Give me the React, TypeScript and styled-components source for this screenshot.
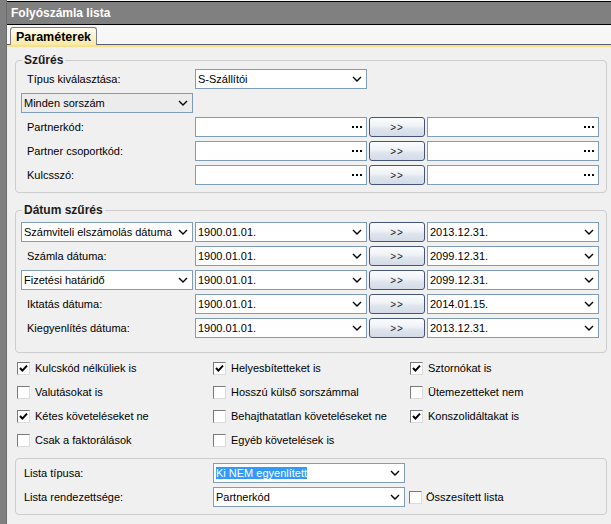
import React from 'react'
import styled, { createGlobalStyle } from 'styled-components'

const GlobalStyle = createGlobalStyle`
  * { box-sizing: border-box; }
  html, body { margin: 0; padding: 0; }
  body {
    font-family: "Liberation Sans", Arial, sans-serif;
    font-size: 11px;
    color: #000;
    background: #f0f0f0;
  }
`

const Window = styled.div`
  display: flex;
  width: 611px;
  height: 524px;
  overflow: hidden;
  background: #f0f0f0;
`
const SideStripe = styled.div`
  width: 7px;
  flex-shrink: 0;
  background: #808080;
  border-right: 1px solid #6c6c6c;
`
const Main = styled.div`
  flex: 1;
  display: flex;
  flex-direction: column;
  padding-top: 1px;
  background: #f7f7f7;
`
const TitleBar = styled.div`
  height: 24px;
  display: flex;
  align-items: center;
  padding-left: 4px;
  background: #808080;
  border-top: 1px solid #000;
  border-bottom: 1px solid #000;
  color: #fff;
  font-weight: bold;
  font-size: 12px;
`
const TabStrip = styled.div`
  height: 20px;
  display: flex;
  align-items: flex-end;
  padding-left: 3px;
  background: #f7f7f7;
  border-bottom: 1px solid #5c5c6e;
`
const Tab = styled.div`
  height: 18px;
  margin-bottom: -1px;
  padding: 0 5px 0 5px;
  display: flex;
  align-items: center;
  border: 1px solid #7c7c8c;
  border-bottom: none;
  border-radius: 3px 3px 0 0;
  background: linear-gradient(#fffdf2, #fbe9a2);
  font-weight: bold;
  font-size: 12.5px;
`
const TabBand = styled.div`
  height: 2px;
  background: #f9e18b;
`
const Panel = styled.div`
  flex: 1;
  display: flex;
  flex-direction: column;
  padding: 0 5px 0 8px;
  background: #f0f0f0;
`
const Group = styled.fieldset<{ $mt: number; $pt: number; $pb: number; $pl?: number }>`
  margin: ${p => p.$mt}px 0 0 0;
  min-width: 0;
  padding: ${p => p.$pt}px 7px ${p => p.$pb}px ${p => p.$pl ?? 5}px;
  border: 1px solid #cdcdcd;
  border-radius: 4px;
`
const Legend = styled.legend`
  margin-left: 1px;
  padding: 0 2px;
  line-height: 14px;
  font-weight: bold;
  font-size: 12px;
  color: #1c1c1c;
`
const FieldGrid = styled.div`
  display: grid;
  grid-template-columns: 172px 172px 56px 172px;
  grid-auto-rows: 20px;
  gap: 4px 2px;
`
const Label = styled.div<{ $indent?: number }>`
  display: flex;
  align-items: center;
  padding-left: ${p => p.$indent ?? 6}px;
  white-space: nowrap;
`
const Combo = styled.div<{ $muted?: boolean }>`
  display: flex;
  align-items: center;
  justify-content: space-between;
  gap: 4px;
  padding: 0 4px 0 2px;
  border: 1px solid #7f9db9;
  background: ${p => (p.$muted ? '#ececec' : '#fff')};
  white-space: nowrap;
  span {
    overflow: hidden;
  }
  svg {
    flex-shrink: 0;
  }
`
const TextBox = styled.div`
  display: flex;
  align-items: center;
  justify-content: flex-end;
  padding-right: 4px;
  border: 1px solid #7f9db9;
  background: #fff;
`
const Selected = styled.span`
  background: #3399ff;
  color: #fff;
  padding: 2px 0;
`
const ArrowButton = styled.div`
  display: flex;
  align-items: center;
  justify-content: center;
  border: 1px solid #44547c;
  border-radius: 3px;
  background: linear-gradient(#fbfcfd 0%, #eef1f6 45%, #dfe5ee 60%, #d4dbe7 100%);
  font-size: 10px;
  letter-spacing: 1px;
  color: #222;
`
const CheckGrid = styled.div`
  display: grid;
  grid-template-columns: 196px 197px 1fr;
  grid-auto-rows: 24px;
  margin: 3px 0 6px 2px;
`
const CheckItem = styled.label`
  display: flex;
  align-items: center;
  gap: 5px;
  white-space: nowrap;
`
const Box = styled.span`
  width: 13px;
  height: 13px;
  flex-shrink: 0;
  display: flex;
  align-items: center;
  justify-content: center;
  background: #fff;
  border: 1px solid;
  border-color: #7a7a7a #dcdcdc #dcdcdc #7a7a7a;
`
const ListGrid = styled.div`
  display: grid;
  grid-template-columns: 189px 192px auto;
  grid-auto-rows: 20px;
  row-gap: 4px;
`
const Trailing = styled.div`
  display: flex;
  align-items: center;
  gap: 4px;
  padding-left: 4px;
`

const Chevron = () => (
  <svg width="10" height="6" viewBox="0 0 10 6">
    <polyline points="1,1 5,5 9,1" fill="none" stroke="#000" strokeWidth="1.4" />
  </svg>
)

const Dots = () => (
  <svg width="10" height="2" viewBox="0 0 10 2">
    <rect x="0" y="0" width="2" height="2" fill="#000" />
    <rect x="4" y="0" width="2" height="2" fill="#000" />
    <rect x="8" y="0" width="2" height="2" fill="#000" />
  </svg>
)

const Check = ({ checked }: { checked?: boolean }) => (
  <Box>
    {checked ? (
      <svg width="9" height="9" viewBox="0 0 9 9">
        <polyline points="1,4 3.4,6.6 8,1.6" fill="none" stroke="#000" strokeWidth="2" />
      </svg>
    ) : null}
  </Box>
)

const Select = ({ children, muted }: { children: React.ReactNode; muted?: boolean }) => (
  <Combo $muted={muted}>
    <span>{children}</span>
    <Chevron />
  </Combo>
)

const Picker = () => (
  <TextBox>
    <Dots />
  </TextBox>
)

const partnerRows = ['Partnerkód:', 'Partner csoportkód:', 'Kulcsszó:']

const dateRows = [
  { label: 'Számviteli elszámolás dátuma', combo: true, from: '1900.01.01.', to: '2013.12.31.' },
  { label: 'Számla dátuma:', combo: false, from: '1900.01.01.', to: '2099.12.31.' },
  { label: 'Fizetési határidő', combo: true, from: '1900.01.01.', to: '2099.12.31.' },
  { label: 'Iktatás dátuma:', combo: false, from: '1900.01.01.', to: '2014.01.15.' },
  { label: 'Kiegyenlítés dátuma:', combo: false, from: '1900.01.01.', to: '2013.12.31.' },
]

const options = [
  { text: 'Kulcskód nélküliek is', checked: true },
  { text: 'Helyesbítetteket is', checked: true },
  { text: 'Sztornókat is', checked: true },
  { text: 'Valutásokat is' },
  { text: 'Hosszú külső sorszámmal' },
  { text: 'Ütemezetteket nem' },
  { text: 'Kétes követeléseket ne', checked: true },
  { text: 'Behajthatatlan követeléseket ne' },
  { text: 'Konszolidáltakat is', checked: true },
  { text: 'Csak a faktorálások' },
  { text: 'Egyéb követelések is' },
]

const App = () => (
  <>
    <GlobalStyle />
    <Window>
      <SideStripe />
      <Main>
        <TitleBar>Folyószámla lista</TitleBar>
        <TabStrip>
          <Tab>Paraméterek</Tab>
        </TabStrip>
        <TabBand />
        <Panel>
          <Group $mt={6} $pt={2} $pb={7}>
            <Legend>Szűrés</Legend>
            <FieldGrid>
              <Label>Típus kiválasztása:</Label>
              <Select>S-Szállítói</Select>
              <div />
              <div />
              <Select muted>Minden sorszám</Select>
              <div />
              <div />
              <div />
              {partnerRows.map(label => (
                <React.Fragment key={label}>
                  <Label>{label}</Label>
                  <Picker />
                  <ArrowButton>&gt;&gt;</ArrowButton>
                  <Picker />
                </React.Fragment>
              ))}
            </FieldGrid>
          </Group>

          <Group $mt={10} $pt={5} $pb={14}>
            <Legend>Dátum szűrés</Legend>
            <FieldGrid>
              {dateRows.map(row => (
                <React.Fragment key={row.label}>
                  {row.combo ? <Select>{row.label}</Select> : <Label>{row.label}</Label>}
                  <Select>{row.from}</Select>
                  <ArrowButton>&gt;&gt;</ArrowButton>
                  <Select>{row.to}</Select>
                </React.Fragment>
              ))}
            </FieldGrid>
          </Group>

          <CheckGrid>
            {options.map(o => (
              <CheckItem key={o.text}>
                <Check checked={o.checked} />
                {o.text}
              </CheckItem>
            ))}
          </CheckGrid>

          <Group $mt={0} $pt={4} $pb={7} $pl={8}>
            <ListGrid>
              <Label $indent={0}>Lista típusa:</Label>
              <Select>
                <Selected>Ki NEM egyenlített</Selected>
              </Select>
              <div />
              <Label $indent={0}>Lista rendezettsége:</Label>
              <Select>Partnerkód</Select>
              <Trailing>
                <Check />
                Összesített lista
              </Trailing>
            </ListGrid>
          </Group>
        </Panel>
      </Main>
    </Window>
  </>
)

export default App
